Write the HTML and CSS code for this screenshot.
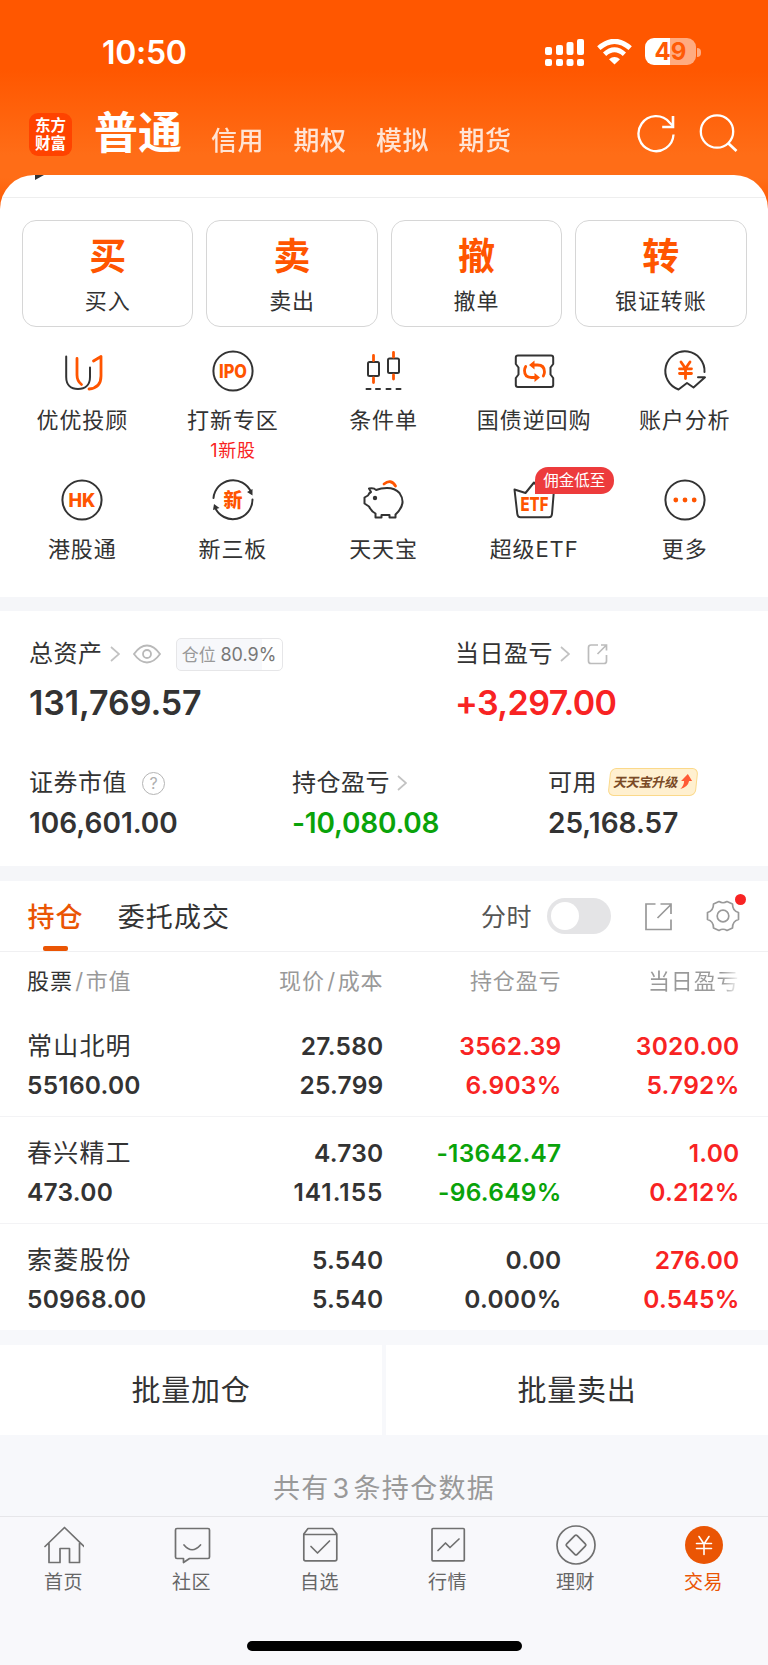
FILE: index.html
```html
<!DOCTYPE html>
<html lang="zh-CN">
<head>
<meta charset="utf-8">
<title>交易</title>
<link rel="stylesheet" href="styles.css">
</head>
<body>
<div class="app">
  <header class="top">
    <div class="status">
      <span class="time">10:50</span>
      <svg class="signal" width="40" height="28" viewBox="0 0 40 28" fill="#fff"><rect x="1" y="9" width="7" height="8" rx="2"/><rect x="12" y="7" width="7" height="10" rx="2"/><rect x="22.500" y="4" width="7" height="13" rx="2"/><rect x="33" y="1" width="7" height="16" rx="2"/><rect x="1" y="21" width="7" height="7" rx="2"/><rect x="12" y="21" width="7" height="7" rx="2"/><rect x="22.500" y="21" width="7" height="7" rx="2"/><rect x="33" y="21" width="7" height="7" rx="2"/></svg>
      <svg class="wifi" width="35" height="26" viewBox="0 0 35 26" fill="none" stroke="#fff"><path d="M1.800 9.200Q17.500-4.600 33.200 9.200" stroke-width="5"/><path d="M7.600 15.200Q17.500 6.200 27.400 15.200" stroke-width="4.800"/><path d="M12 20.300Q17.500 15.800 23 20.300L17.500 25.500z" fill="#fff" stroke="none"/></svg>
      <div class="battery"><span>49</span></div><i class="battery-tip"></i>
    </div>
    <nav class="nav">
      <div class="logo"><span>东方</span><span>财富</span></div>
      <span class="nav-main">普通</span>
      <span class="nav-item">信用</span><span class="nav-item">期权</span><span class="nav-item">模拟</span><span class="nav-item">期货</span>
      <svg class="nav-icons" width="102" height="42" viewBox="0 0 102 42" fill="none" stroke="#fff" stroke-width="2.300"><path d="M36.500 21.500A17.500 17.500 0 1 1 32.500 9.500L36 13"/><path d="M36 3V14H25.200" stroke-width="2.600"/><circle cx="80" cy="18.500" r="16.200"/><path d="M91 30L99.500 38" stroke-width="2.800"/></svg>
    </nav>
  </header>

  <main class="sheet">
    <div class="peek"><i></i></div>
    <section class="cards">
      <div class="card"><b>买</b><span>买入</span></div>
      <div class="card"><b>卖</b><span>卖出</span></div>
      <div class="card"><b>撤</b><span>撤单</span></div>
      <div class="card"><b>转</b><span>银证转账</span></div>
    </section>

    <section class="grid">
      <div class="cell"><svg class="ic" viewBox="0 0 44 44"><path d="M6.200 7.500V28C6.200 36 11 40 18 40S30 36 30 28V18.500"/><path class="o" d="M17 9.500V26Q17 32 21.500 35.500M33.500 12L41 7.500V27Q41 39 29 40"/></svg><span>优优投顾</span></div>
      <div class="cell"><svg class="ic" viewBox="0 0 44 44"><circle cx="22" cy="22" r="19.600"/><text class="t" x="22" y="28.800" font-size="18.500" textLength="28" lengthAdjust="spacingAndGlyphs">IPO</text></svg><span>打新专区</span><em>1新股</em></div>
      <div class="cell"><svg class="ic" viewBox="0 0 44 44"><rect x="7" y="13" width="11" height="14" rx="1.500"/><rect x="27" y="9.500" width="11" height="14.500" rx="1.500"/><path class="o" d="M12.500 6.500V11.500M12.500 29V33.500M32.500 3.500V8M32.500 26V30"/><path d="M5.500 40H9.500M15 40H19M25.500 40H29.500M35.500 40H39.500"/></svg><span>条件单</span></div>
      <div class="cell"><svg class="ic" viewBox="0 0 44 44"><path d="M6 6.500H39Q41.200 6.500 41.200 8.500V15L38.500 18.500V25.500L41.200 29V36Q41.200 38 39 38H6Q3.800 38 3.800 36V29L6.500 25.500V18.500L3.800 15V8.500Q3.800 6.500 6 6.500z"/><path class="o" d="M21 16H25.500Q32.500 16 32.500 23Q32.500 25 31.300 27M24 28.500H19.500Q12.500 28.500 12.500 21.500Q12.500 19.500 13.700 17.500"/><path class="of" d="M22.500 11.500V20.500L17 16zM22.500 24V33L28 28.500z"/></svg><span>国债逆回购</span></div>
      <div class="cell"><svg class="ic" viewBox="0 0 44 44"><path d="M41.500 23A19.600 19.600 0 1 0 15.500 40.500L24 34L30.500 38.500L42 28.300H35"/><path class="o" d="M18 13L22.500 19.500L27 13M16.500 19.800H28.500M16.500 24.500H28.500M22.500 19V29.500"/></svg><span>账户分析</span></div>
      <div class="cell"><svg class="ic" viewBox="0 0 44 44"><circle cx="22" cy="22" r="19.600"/><text class="t" x="22" y="28.800" font-size="18.500" textLength="27" lengthAdjust="spacingAndGlyphs">HK</text></svg><span>港股通</span></div>
      <div class="cell"><svg class="ic" viewBox="0 0 44 44"><path d="M2.500 20A19.600 19.600 0 0 1 40 14M41.500 21.500A19.600 19.600 0 0 1 4 29.500"/><path class="kf" d="M41.500 11V17.500L36 14zM3 26L8.500 30L2 32z"/><text class="t" x="22" y="29" font-size="19">新</text></svg><span>新三板</span></div>
      <div class="cell"><svg class="ic" viewBox="0 0 44 44"><path d="M8 10.500Q13 9.500 15 12Q20 10 26 10Q34 10 38.500 15Q42 20 41.500 25Q40.500 31 34.500 36.500V39.500H28.500V37H20.500V39.500H14.500V35.500Q10 33 8 28.500L3.500 25.500V19.500L7 17.500Q8 15 10 14z"/><path class="o" d="M23 6Q30 .5 34.500 8"/><circle class="kf" cx="14" cy="20" r="2.200"/></svg><span>天天宝</span></div>
      <div class="cell"><svg class="ic" viewBox="0 0 44 44"><path d="M2.500 11.500L13.500 15L22 4.500L31.500 15L42 11.500L40 36Q39.700 39.300 37 39.300H8.500Q5.700 39.300 5.300 36z"/><text class="t" x="22.500" y="33" font-size="19" textLength="28" lengthAdjust="spacingAndGlyphs">ETF</text></svg><span>超级ETF</span><u class="badge">佣金低至</u></div>
      <div class="cell"><svg class="ic" viewBox="0 0 44 44"><circle cx="22" cy="22" r="19.600"/><g class="of"><circle cx="12.800" cy="22" r="2.400"/><circle cx="22" cy="22" r="2.400"/><circle cx="31.200" cy="22" r="2.400"/></g></svg><span>更多</span></div>
    </section>

    <section class="assets">
      <div class="row big">
        <div class="item total">
          <div class="label">总资产<svg class="chev" viewBox="0 0 10 16"><path d="M1 1L9 8L1 15"/></svg><svg class="eye" viewBox="0 0 28 20"><path d="M1 10Q7 1.500 14 1.500T27 10Q21 18.500 14 18.500T1 10z"/><circle cx="14" cy="10" r="4"/></svg><span class="pos">仓位 <b>80.9%</b></span></div>
          <div class="num">131,769.57</div>
        </div>
        <div class="item">
          <div class="label">当日盈亏<svg class="chev" viewBox="0 0 10 16"><path d="M1 1L9 8L1 15"/></svg><svg class="share" viewBox="0 0 22 22"><path d="M11 2H4Q1.500 2 1.500 4.500V18Q1.500 20.500 4 20.500H17Q19.500 20.500 19.500 18V12M14 2H19.500V7.500M19.500 2L10.500 11"/></svg></div>
          <div class="num red">+3,297.00</div>
        </div>
      </div>
      <div class="row small">
        <div class="item sec"><div class="label">证券市值<span class="help">?</span></div><div class="num">106,601.00</div></div>
        <div class="item pl"><div class="label">持仓盈亏<svg class="chev" viewBox="0 0 10 16"><path d="M1 1L9 8L1 15"/></svg></div><div class="num green">-10,080.08</div></div>
        <div class="item"><div class="label">可用<span class="upgrade"><i>天天宝升级</i><svg width="12" height="16" viewBox="0 0 12 16"><path d="M7 0L12 7H9Q8.500 13 1 15Q4.500 11.500 4 7H1z" fill="#ff5a35"/></svg></span></div><div class="num">25,168.57</div></div>
      </div>
    </section>

    <section class="tabs">
      <div class="tab on">持仓</div>
      <div class="tab">委托成交</div>
      <span class="fs">分时</span>
      <div class="switch"><i></i></div>
      <svg class="share2" width="30" height="30" viewBox="0 0 30 30"><path d="M11.500 2H2V27.500H27V17.500M16.500 2H27V12M27 2.500L13.500 16"/></svg>
      <div class="gear"><svg width="34" height="34" viewBox="0 0 34 34"><path d="M13 2.500Q17 5 21 2.500L26.500 5Q26.500 12 32.500 13.500V20.500Q26.500 22 26.500 29L21 31.500Q17 29 13 31.500L7.500 29Q7.500 22 1.500 20.500V13.500Q7.500 12 7.500 5z"/><circle cx="17" cy="17" r="5.800"/></svg><i></i></div>
    </section>

    <section class="table">
      <div class="tr th"><div><b>股票</b><s>/</s>市值</div><div>现价<s>/</s>成本</div><div>持仓盈亏</div><div class="fade">当日盈亏</div></div>
      <div class="tr"><div><span class="name">常山北明</span><span>55160.00</span></div><div><span>27.580</span><span>25.799</span></div><div class="red"><span>3562.39</span><span>6.903%</span></div><div class="red"><span>3020.00</span><span>5.792%</span></div></div>
      <div class="tr"><div><span class="name">春兴精工</span><span>473.00</span></div><div><span>4.730</span><span class="wide">141.155</span></div><div class="green"><span>-13642.47</span><span>-96.649%</span></div><div class="red"><span>1.00</span><span>0.212%</span></div></div>
      <div class="tr"><div><span class="name">索菱股份</span><span>50968.00</span></div><div><span>5.540</span><span>5.540</span></div><div><span>0.00</span><span>0.000%</span></div><div class="red"><span>276.00</span><span>0.545%</span></div></div>
    </section>
  </main>

  <section class="batch"><div>批量加仓</div><div>批量卖出</div></section>
  <p class="count">共有<span>3</span>条持仓数据</p>

  <footer class="bar">
    <nav class="bar-items">
      <div class="bi"><svg viewBox="0 0 40 40"><path d="M1 21.500L20.500 2.500L40 21.500M5 18.500V37.500H16V23.500H25.500V37.500H35.500V18.500"/></svg><span>首页</span></div>
      <div class="bi"><svg viewBox="0 0 40 40"><path d="M5 3.500H36Q37.500 3.500 37.500 5V32Q37.500 33.500 36 33.500H17.500L11.500 37.500V33.500H5Q3.500 33.500 3.500 32V5Q3.500 3.500 5 3.500zM12 20Q20 29.500 28.500 20"/></svg><span>社区</span></div>
      <div class="bi"><svg viewBox="0 0 40 40"><path d="M3.800 9L8 3.500H32.500L36.800 9V34Q36.800 35.800 35 35.800H5.500Q3.800 35.800 3.800 34zM3.800 9.500H36.800M11 21.500L17.500 28L29.500 16"/></svg><span>自选</span></div>
      <div class="bi"><svg viewBox="0 0 40 40"><rect x="4" y="3.500" width="32.300" height="32.300" rx="1"/><path d="M10 25.500L17.500 18L22 22.500L31 14"/></svg><span>行情</span></div>
      <div class="bi"><svg viewBox="0 0 40 40"><circle cx="20" cy="20" r="19"/><path d="M18.800 10.700Q20 9.500 21.200 10.700L29.300 18.800Q30.500 20 29.300 21.200L21.200 29.300Q20 30.500 18.800 29.300L10.700 21.200Q9.500 20 10.700 18.800z"/></svg><span>理财</span></div>
      <div class="bi on"><svg viewBox="0 0 40 40"><circle cx="20" cy="20" r="19" fill="#ea5504" stroke="none"/><path stroke="#fff" stroke-width="1.600" d="M15 11.500L20 19L25 11.500M12.500 18.500H27.500M12.500 23.500H27.500M20 19V29.500"/></svg><span>交易</span></div>
    </nav>
    <i class="home"></i>
  </footer>
</div>
</body>
</html>
```
FILE: styles.css
```css
* { box-sizing: border-box; }
body { margin: 0; background: #f7f8fb; font-family: Inter, "Noto Sans CJK SC", sans-serif; color: #333; font-weight: 400; }
i, em { font-style: normal; }
u, s { text-decoration: none; }
svg { display: block; flex: none; }
.app { width: 768px; height: 1665px; overflow: hidden; display: flex; flex-direction: column; }
.red { color: #f82323; }
.green { color: #0aa30a; }

.top { height: 215px; margin-bottom: -40px; flex: none; background: linear-gradient(#ff5700 0, #ff5700 70px, #ff6d17 155px, #ff6d17 178px, #ff5c04 205px); color: #fff; }
.status { height: 100px; padding: 4px 67px 0 102px; display: flex; align-items: center; }
.time { font-size: 32px; font-weight: 600; line-height: 40px; margin: 2px auto 0 0; letter-spacing: -.3px; }
.signal { margin-right: 13px; }
.wifi { margin-right: 13px; }
.battery { width: 51px; height: 27px; margin-top: -1px; border-radius: 9px; background: linear-gradient(90deg, #fff 49%, #ffab80 49%); color: #ff5a05; font-size: 24px; font-weight: 700; line-height: 27px; text-align: center; }
.battery-tip { width: 4px; height: 9px; margin-left: 1px; border-radius: 0 4px 4px 0; background: #ffab80; }
.nav { height: 75px; padding: 0 29px 0 29px; display: flex; align-items: flex-start; }
.logo { width: 43px; height: 43px; margin-top: 13px; border-radius: 9px; background: #ff4300; font-size: 15.500px; font-weight: 700; line-height: 18px; text-align: center; padding-top: 4px; }
.logo span { display: block; }
.nav-main { margin: 8px 28px 0 22px; font-size: 44px; line-height: 50px; font-weight: 600; }
.nav-item { margin: 21px 28.500px 0 1px; font-size: 26px; letter-spacing: .5px; line-height: 40px; opacity: .82; font-weight: 500; }
.nav-icons { margin: 13px 0 0 auto; }

.sheet { flex: none; background: #fff; border-radius: 34px 34px 0 0; overflow: hidden; height: 1155px; }
.peek { height: 23px; border-bottom: 1px solid #eee; padding-left: 35px; }
.peek i { display: block; width: 9px; height: 5px; background: #333; clip-path: polygon(0 0, 100% 0, 0 100%); }
.cards { display: grid; grid-template-columns: repeat(4, 171.400px); gap: 13px; padding: 22px 22px 0; }
.card { height: 107px; border: 1px solid #d6d6d6; border-radius: 14px; display: flex; flex-direction: column; align-items: center; padding-top: 14px; }
.card b { color: #ff5500; font-size: 37px; line-height: 44px; font-weight: 600; }
.card span { font-size: 22px; letter-spacing: .9px; line-height: 30px; margin-top: 7px; }
.grid { display: grid; grid-template-columns: repeat(5, 1fr); grid-auto-rows: 128.500px; padding: 22px 8px 0 7px; height: 270px; }
.cell { position: relative; display: flex; flex-direction: column; align-items: center; }
.cell span { font-size: 22px; letter-spacing: .9px; line-height: 30px; margin-top: 12px; }
.cell em { color: #f82323; font-size: 18px; letter-spacing: .7px; line-height: 24px; margin-top: 4px; }
.ic { width: 44px; height: 44px; fill: none; stroke: #333; stroke-width: 2; stroke-linejoin: round; stroke-linecap: round; }
.ic .o { stroke: #ff5500; stroke-width: 2.800; }
.ic .of { fill: #ff5500; stroke: none; }
.ic .kf { fill: #333; stroke: none; }
.ic .t { fill: #ff5500; stroke: none; font-weight: 800; text-anchor: middle; }
.badge { position: absolute; left: 76px; top: -11px; width: 79px; height: 27px; border-radius: 13px 13px 13px 0; background: #ed3b3c; color: #fff; font-size: 15.500px; line-height: 27px; text-align: center; }

.assets { border-top: 14px solid #f5f6f9; border-bottom: 15px solid #f5f6f9; height: 284px; margin-top: 0; }
.row { display: flex; padding-left: 29px; }
.big { padding-top: 27px; height: 127px; }
.label { display: flex; align-items: center; font-size: 24px; letter-spacing: .5px; line-height: 32px; height: 32px; }
.total { width: 426px; }
.num { font-weight: 600; white-space: nowrap; }
.big .num { font-size: 34px; line-height: 40px; margin-top: 13px; letter-spacing: -.1px; }
.big .red { letter-spacing: -.6px; }
.small .num { font-size: 28px; line-height: 36px; margin-top: 6px; }
.small .green { letter-spacing: -.2px; }
.small { padding-top: 29px; }
.sec { width: 263px; }
.pl { width: 256px; }
.chev { width: 10px; height: 16px; margin-left: 7px; fill: none; stroke: #c2c2c2; stroke-width: 1.700; }
.eye { width: 28px; height: 20px; margin-left: 13px; fill: none; stroke: #b9b9b9; stroke-width: 1.800; }
.pos { margin-left: 15px; width: 107px; height: 33px; border: 1px solid #e6e6e8; border-radius: 5px; background: linear-gradient(90deg, #f7f8fb 81%, #fff 81%); color: #999; font-size: 17px; line-height: 31px; text-align: center; letter-spacing: 0; white-space: nowrap; }
.pos b { font-weight: 400; font-size: 18px; color: #777; }
.share { width: 22px; height: 22px; margin-left: 17px; fill: none; stroke: #bcbcbc; stroke-width: 1.700; }
.help { width: 23px; height: 23px; border: 1.500px solid #b5b5b5; border-radius: 50%; margin-left: 15px; color: #b0b0b0; font-size: 16px; line-height: 21px; text-align: center; letter-spacing: 0; }
.upgrade { width: 88px; height: 28px; margin: -3px 0 0 12px; border: 1.500px solid #fbd98a; border-radius: 6px; background: #fff0d0; transform: skewX(-6deg); display: flex; align-items: center; justify-content: center; font-size: 13px; font-weight: 700; color: #7a4a26; letter-spacing: -.2px; gap: 2px; }
.upgrade i { display: block; transform: skewX(-6deg); }

.tabs { height: 71px; border-bottom: 1px solid #f0f0f2; display: flex; padding: 0 15px 0 27.500px; }
.tab { font-size: 27px; letter-spacing: 1.100px; line-height: 73px; margin-right: 34px; }
.tab.on { position: relative; color: #ea5504; font-weight: 500; }
.tab.on::after { content: ""; position: absolute; left: 15px; bottom: 0; width: 25px; height: 5px; border-radius: 2px; background: #ea5504; }
.fs { margin-left: auto; font-size: 25px; letter-spacing: .5px; line-height: 73px; color: #555; }
.switch { width: 64px; height: 36px; margin: 17px 0 0 15px; border-radius: 18px; background: #e4e4e6; padding: 4px; }
.switch i { display: block; width: 28px; height: 28px; border-radius: 50%; background: #fff; }
.share2 { margin: 20.500px 0 0 33px; fill: none; stroke: #999; stroke-width: 1.700; }
.gear { position: relative; margin: 18px 0 0 32px; width: 47px; }
.gear svg { fill: none; stroke: #999; stroke-width: 1.700; stroke-linejoin: round; }
.gear i { position: absolute; left: 29px; top: -5px; width: 11px; height: 11px; border-radius: 50%; background: #f82323; }

.tr { display: grid; grid-template-columns: 156px 200.500px 178px 178px; height: 107px; padding: 16.500px 0 0 27px; border-bottom: 1px solid #f3f3f5; font-size: 24.500px; font-weight: 600; letter-spacing: .25px; }
.tr > div { display: flex; flex-direction: column; text-align: right; line-height: 39px; }
.tr > div:first-child { text-align: left; }
.tr .name { font-size: 25px; letter-spacing: 1.200px; font-weight: 400; }
.tr .wide { letter-spacing: 1px; }
.tr.th { height: 58px; padding-top: 10px; border: 0; font-size: 22px; font-weight: 400; letter-spacing: .9px; color: #999; }
.tr.th > div { display: block; }
.th b { font-weight: 400; color: #333; }
.th s { margin: 0 1.500px 0 2.500px; }
.th .fade { background: linear-gradient(90deg, #999 80%, #fff 100%); -webkit-background-clip: text; background-clip: text; color: transparent; justify-self: end; }

.batch { flex: none; display: grid; grid-template-columns: 1fr 1fr; gap: 4px; margin-top: 15px; height: 90px; }
.batch div { background: #fff; font-size: 29px; letter-spacing: .7px; line-height: 92px; height: 90px; text-align: center; }
.count { margin: 0; height: 81px; flex: none; color: #999; font-size: 27px; letter-spacing: 1.300px; line-height: 108px; text-align: center; }
.count span { margin: 0 3px; }
.bar { flex: 1; border-top: 1px solid #e6e6e9; background: #f8f8fb; position: relative; z-index: 1; display: flex; flex-direction: column; align-items: center; }
.bar-items { display: grid; grid-template-columns: repeat(6, 128px); padding-top: 8px; }
.bi { display: flex; flex-direction: column; align-items: center; color: #666; font-size: 19px; letter-spacing: .5px; line-height: 26px; }
.bi svg { width: 40px; height: 40px; margin-right: 1px; fill: none; stroke: #707070; stroke-width: 1.700; stroke-linejoin: round; stroke-linecap: round; }
.bi span { margin: 5px 1px 0 0; }
.bi.on { color: #ea5504; }
.home { width: 275px; height: 10px; border-radius: 5px; background: #000; margin-top: 45px; }
```
